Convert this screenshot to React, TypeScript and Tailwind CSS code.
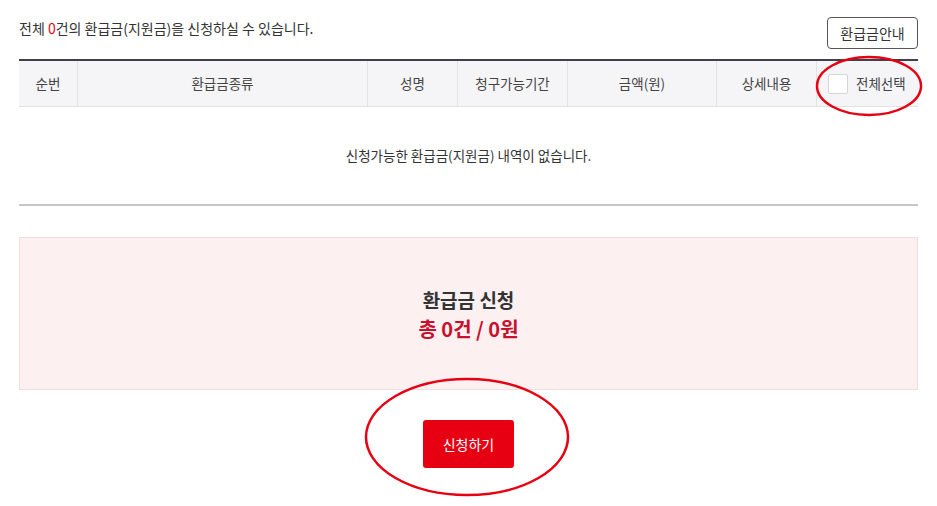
import React from 'react';

const cols = [
  { label: '순번', w: 'w-[59px]' },
  { label: '환급금종류', w: 'w-[290px]' },
  { label: '성명', w: 'w-[90px]' },
  { label: '청구가능기간', w: 'w-[110px]' },
  { label: '금액(원)', w: 'w-[149px]' },
  { label: '상세내용', w: 'w-[100px]' },
];

export default function App() {
  return (
    <div className="relative w-[937px] h-[506px] bg-white text-[#333] font-['Noto_Sans_CJK_KR','Noto_Sans',sans-serif]">
      <div className="px-[19px] pt-[17px]">
        {/* top row */}
        <div className="flex items-start justify-between h-[32px]">
          <p className="text-[14px] leading-[20px] mt-[1px] text-[#333]">
            전체 <span className="text-[#e60012]">0</span>건의 환급금(지원금)을 신청하실 수 있습니다.
          </p>
          <button className="h-[32px] w-[91px] border border-[#555] rounded-[4px] text-[14px] text-[#333] bg-white">
            환급금안내
          </button>
        </div>

        {/* table */}
        <div className="mt-[10px] border-t-2 border-[#3f3f4d]">
          <div className="flex h-[46px] bg-[#f5f5f7] border-b border-[#e3e3e3] text-[13.5px] text-[#444]">
            {cols.map((c) => (
              <div key={c.label} className={`${c.w} flex items-center justify-center border-r border-[#e3e3e3]`}>
                {c.label}
              </div>
            ))}
            <div className="flex-1 flex items-center gap-[8px] pl-[11px]">
              <span className="w-[20px] h-[20px] border border-[#d5d5d5] rounded-[2px] bg-white" />
              <span>전체선택</span>
            </div>
          </div>
          <div className="h-[99px] flex items-center justify-center text-[13.5px] text-[#333] border-b-2 border-[#c6c6c6]">
            신청가능한 환급금(지원금) 내역이 없습니다.
          </div>
        </div>

        {/* summary */}
        <div className="mt-[31px] h-[153px] bg-[#fdf0f0] border border-[#f1dede] flex flex-col items-center justify-center">
          <div className="text-[19px] font-bold text-[#333] leading-[28px] mt-[2px]">환급금 신청</div>
          <div className="text-[20px] font-bold text-[#c8102e] leading-[30px]">총 0건 / 0원</div>
        </div>

        <div className="flex justify-center mt-[30px]">
          <button className="w-[91px] h-[48px] rounded-[3px] bg-[#e60012] text-white text-[14px]">신청하기</button>
        </div>
      </div>

      {/* annotation ellipses */}
      <svg className="absolute left-0 top-0 pointer-events-none" width="937" height="506">
        <ellipse cx="869" cy="86" rx="52" ry="29" fill="none" stroke="#e60012" strokeWidth="2.5" />
        <ellipse cx="467" cy="437" rx="101" ry="58" fill="none" stroke="#e60012" strokeWidth="2.5" />
      </svg>
    </div>
  );
}
